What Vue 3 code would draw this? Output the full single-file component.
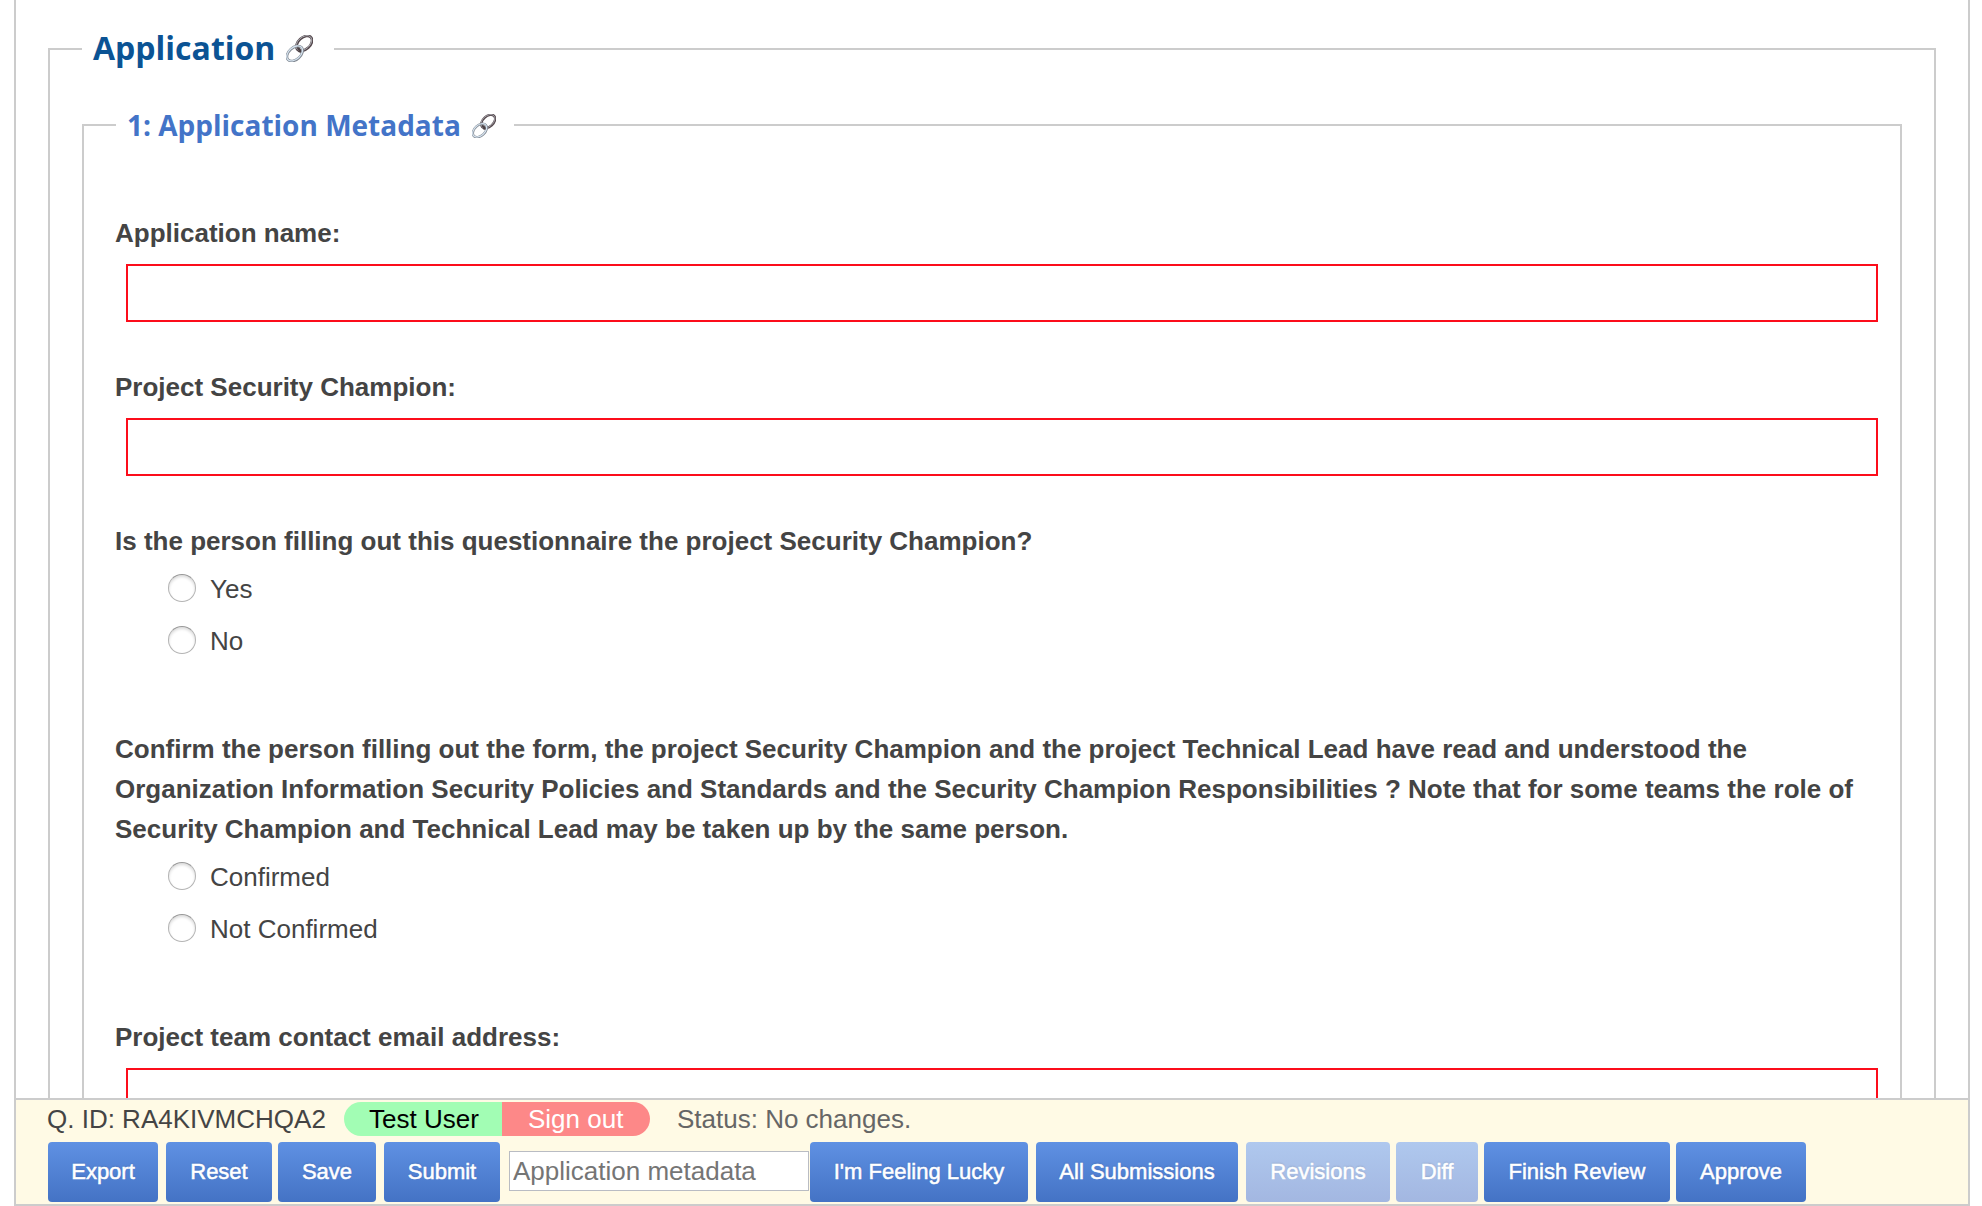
<script setup>
import { h } from 'vue'

const fields = [
  { label: 'Application name:', type: 'text' },
  { label: 'Project Security Champion:', type: 'text' },
  {
    label: 'Is the person filling out this questionnaire the project Security Champion?',
    type: 'radio',
    options: ['Yes', 'No'],
  },
  {
    label:
      'Confirm the person filling out the form, the project Security Champion and the project Technical Lead have read and understood the Organization Information Security Policies and Standards and the Security Champion Responsibilities ? Note that for some teams the role of Security Champion and Technical Lead may be taken up by the same person.',
    type: 'radio',
    options: ['Confirmed', 'Not Confirmed'],
  },
  { label: 'Project team contact email address:', type: 'text' },
]

const leftButtons = [
  { text: 'Export', w: 110, gap: 8 },
  { text: 'Reset', w: 106, gap: 6 },
  { text: 'Save', w: 98, gap: 8 },
  { text: 'Submit', w: 116, gap: 9 },
]
const rightButtons = [
  { text: "I'm Feeling Lucky", w: 218, gap: 8 },
  { text: 'All Submissions', w: 202, gap: 8 },
  { text: 'Revisions', w: 144, gap: 6, off: true },
  { text: 'Diff', w: 82, gap: 6, off: true },
  { text: 'Finish Review', w: 186, gap: 6 },
  { text: 'Approve', w: 130, gap: 0 },
]

const ring = (cx, cy, stroke, width) =>
  h('ellipse', { cx, cy, rx: 27, ry: 17.5, fill: 'none', stroke, 'stroke-width': width, transform: `rotate(-42 ${cx} ${cy})` })

const LinkIcon = () =>
  h('svg', { viewBox: '0 0 80 80', 'aria-hidden': 'true' }, [
    ring(54, 25, '#55484d', 8),
    ring(53, 24, '#b4b6bc', 2.5),
    ring(26, 55, '#7f868f', 8),
    ring(25.5, 54.5, '#d5e2ee', 4),
    h('path', { d: 'M34 39 Q43 41 41 52', fill: 'none', stroke: '#4b4144', 'stroke-width': 7 }),
  ])
</script>

<template>
  <div class="page">
    <main class="form">
      <fieldset class="outer">
        <legend class="title">Application<LinkIcon class="link" /></legend>
        <fieldset class="inner">
          <legend class="subtitle">1: Application Metadata<LinkIcon class="link" /></legend>
          <div v-for="f in fields" :key="f.label" class="field" :class="f.type">
            <div class="label">{{ f.label }}</div>
            <input v-if="f.type === 'text'" class="text-input" type="text" />
            <div v-else class="options">
              <label v-for="o in f.options" :key="o" class="option"><input type="radio" :name="f.label" />{{ o }}</label>
            </div>
          </div>
        </fieldset>
      </fieldset>
    </main>
    <footer class="bar">
      <div class="info">
        <span class="qid">Q. ID: RA4KIVMCHQA2</span>
        <span class="user">Test User</span>
        <span class="signout">Sign out</span>
        <span class="status">Status: No changes.</span>
      </div>
      <div class="actions">
        <button v-for="b in leftButtons" :key="b.text" :style="{ width: b.w + 'px', marginRight: b.gap + 'px' }">{{ b.text }}</button>
        <input class="search" type="text" placeholder="Application metadata" />
        <button
          v-for="b in rightButtons"
          :key="b.text"
          :disabled="b.off"
          :style="{ width: b.w + 'px', marginRight: b.gap + 'px' }"
        >{{ b.text }}</button>
      </div>
    </footer>
  </div>
</template>

<style>
body {
  margin: 0;
  background: #fff;
}
</style>

<style scoped>
.page {
  box-sizing: border-box;
  width: 1982px;
  height: 1206px;
  padding: 0 12px 0 14px;
  overflow: hidden;
  font: 26px/40px 'Liberation Sans', Arial, sans-serif;
  color: #444;
}
.form {
  box-sizing: border-box;
  height: 1098px;
  overflow: hidden;
  border: solid #ccc;
  border-width: 0 2px;
  padding: 28px 32px 0;
}
fieldset {
  box-sizing: border-box;
  margin: 0;
  min-width: 0;
  border: 2px solid #ccc;
}
.outer {
  height: 1400px;
  padding: 35px 32px 0;
}
.inner {
  height: 1300px;
  padding: 68px 22px 0 31px;
}
legend {
  display: flex;
  align-items: center;
  box-sizing: border-box;
  font-family: 'Open Sans', 'Noto Sans', sans-serif;
  font-weight: 700;
  white-space: nowrap;
}
.title {
  width: 252px;
  height: 42px;
  padding: 0 0 3px 11px;
  font-size: 32px;
  line-height: 39px;
  color: #0b5394;
}
.subtitle {
  width: 398px;
  height: 40px;
  margin-left: 1px;
  padding: 0 0 0 11px;
  font-size: 28px;
  line-height: 40px;
  color: #4374c8;
}
.link {
  flex: none;
  width: 27px;
  height: 27px;
  margin-left: 11px;
  margin-top: 2px;
}
.subtitle .link {
  width: 24px;
  height: 24px;
  margin-left: 11px;
}
.label {
  font-weight: 700;
}
.field.text {
  height: 154px;
}
.text-input {
  display: block;
  box-sizing: border-box;
  width: 1752px;
  height: 58px;
  margin: 11px 0 0 11px;
  padding: 0 8px;
  border: 2px solid #fc0d1b;
  background: #fff;
}
.field.radio {
  padding-bottom: 62px;
}
.options {
  padding: 2px 0 0 53px;
}
.option {
  display: flex;
  align-items: center;
  height: 52px;
}
.option input {
  appearance: none;
  box-sizing: border-box;
  width: 28px;
  height: 28px;
  margin: 0 14px 2px 0;
  border: 1.5px solid #b4b4b4;
  border-top-color: #989898;
  border-radius: 50%;
  background: #fff;
  box-shadow: inset 0 2px 3px rgba(0, 0, 0, 0.14);
}
.bar {
  box-sizing: border-box;
  height: 108px;
  border: 2px solid #ccc;
  padding: 2px 0 0 32px;
  background: #fffae5;
}
.info {
  display: flex;
  height: 34px;
  line-height: 34px;
  white-space: nowrap;
}
.qid {
  width: 296px;
  text-indent: -1px;
}
.user {
  box-sizing: border-box;
  width: 158px;
  padding-left: 25px;
  border-radius: 17px 0 0 17px;
  background: #a2fdb4;
  color: #000;
}
.signout {
  box-sizing: border-box;
  width: 148px;
  padding-left: 26px;
  border-radius: 0 17px 17px 0;
  background: #fd8888;
  color: #fff;
}
.status {
  margin-left: 27px;
  color: #666;
}
.actions {
  display: flex;
  align-items: center;
  height: 60px;
  margin-top: 6px;
}
button {
  flex: none;
  height: 60px;
  padding: 0;
  border: 0;
  border-radius: 4px;
  background: linear-gradient(#5f91e3, #4473c5);
  font: 22px 'Liberation Sans', Arial, sans-serif;
  color: #fff;
  text-shadow: 0 -1px 2px rgba(0, 0, 0, 0.12);
  -webkit-text-stroke: 0.5px #fff;
}
button:disabled {
  background: linear-gradient(#afc8ee, #a3b7e1);
}
.search {
  box-sizing: border-box;
  flex: none;
  width: 300px;
  height: 40px;
  margin: 0 1px 2px 0;
  padding: 0 3px;
  border: 1px solid #b9bcc3;
  background: #fff;
  font: 26px 'Liberation Sans', Arial, sans-serif;
}
.search::placeholder {
  color: #757575;
}
</style>
